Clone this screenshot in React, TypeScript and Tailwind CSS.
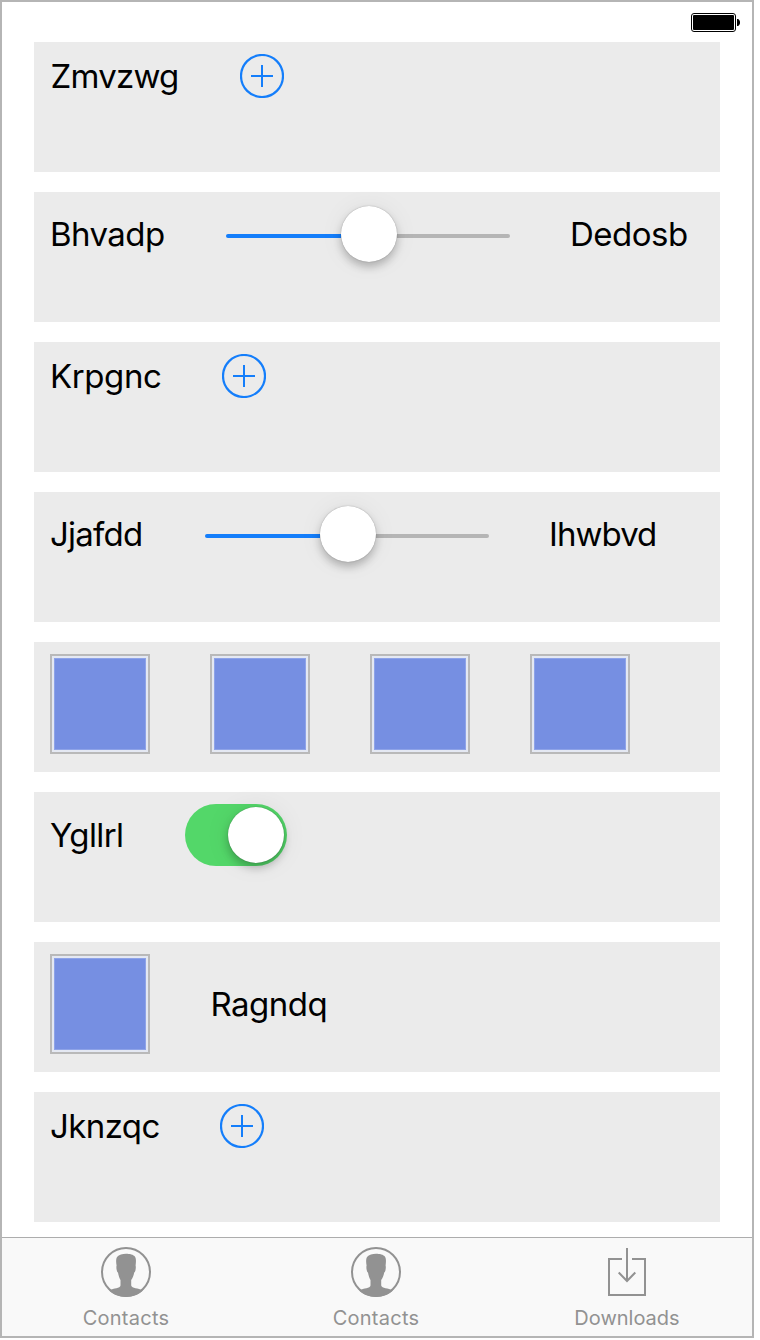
import type { ReactNode } from 'react';

function Row({ children }: { children: ReactNode }) {
  return <section className="flex h-[130px] w-[686px] shrink-0 items-start gap-[60px] bg-[#ebebeb] px-4 pt-3">{children}</section>;
}

function Label({ text, className }: { text: string; className: string }) {
  return <span className={`block h-11 shrink-0 whitespace-nowrap text-[33px] leading-[44px] text-black ${className}`}>{text}</span>;
}

function AddButton() {
  return (
    <button aria-label="Add" className="size-11 shrink-0">
      <svg viewBox="0 0 44 44" className="size-11" fill="none" stroke="#147efb" strokeWidth="2">
        <circle cx="22" cy="22" r="21" strokeWidth="2.2" />
        <path d="M11 22H33M22 11V33" />
      </svg>
    </button>
  );
}

function Slider() {
  return (
    <div className="mt-0.5 flex h-14 w-[284px] shrink-0 items-center">
      <div className="mt-1 h-1 w-[115px] rounded-l-full bg-[#147efb]" />
      <div className="relative z-10 size-14 rounded-full bg-white shadow-[0_0_1px_rgba(0,0,0,0.4),0_5px_8px_rgba(0,0,0,0.23),0_1px_26px_rgba(0,0,0,0.06)]" />
      <div className="mt-1 h-1 w-[113px] rounded-r-full bg-[#b5b5b5]" />
    </div>
  );
}

function Toggle() {
  return (
    <button aria-label="Toggle" className="flex h-[62px] w-[102px] shrink-0 items-center justify-end rounded-full bg-[#53d769] pr-[3px]">
      <span className="size-14 rounded-full bg-white shadow-[0_0_1px_rgba(0,0,0,0.4),0_5px_9px_rgba(0,0,0,0.23),0_1px_26px_rgba(0,0,0,0.08)]" />
    </button>
  );
}

function Tile() {
  return (
    <div className="size-[100px] shrink-0 border-2 border-[#b9b9b9] bg-[#e4e8f2] p-[2px]">
      <div className="size-full border border-[#8ea3e8] bg-[#768fe2]" />
    </div>
  );
}

function ContactIcon() {
  return (
    <svg viewBox="0 0 50 50" className="size-[50px]">
      <circle cx="25" cy="25" r="24" fill="none" stroke="#929292" strokeWidth="2" />
      <path fill="#929292" d="M8 43.5C13 41 19 41.5 19.5 38.5V33C18 30.5 17.5 28 17 25.5C15.6 25 15 20 15.6 18.5C15 15 14.8 12 16 10C18 7.5 21.5 6.8 25 6.8S32.5 7.5 34.2 10C35.3 12 35 15 34.6 18.5C35.2 20 34.5 25 33.2 25.5C32.7 28 32 30.5 30.2 33V38.5C31 41.5 37 41 42 43.5C33 52 17 52 8 43.5Z" />
    </svg>
  );
}

function DownloadIcon() {
  return (
    <svg viewBox="0 0 50 50" className="size-[50px]" fill="none" stroke="#929292" strokeWidth="2">
      <path d="M20 12H7V48H43V12H30" />
      <path d="M25 1V33.5M16.7 25.5L25 34L33.3 25.5" />
    </svg>
  );
}

function Tab({ label, children, className }: { label: string; children: ReactNode; className: string }) {
  return (
    <button className={`flex w-[250px] flex-col items-center pt-[9px] text-[#929292] ${className}`}>
      {children}
      <span className="mt-[7px] whitespace-nowrap text-[20px] leading-7">{label}</span>
    </button>
  );
}

export default function App() {
  return (
    <div className="h-[1340px] w-[760px] bg-white font-['Inter','Liberation_Sans',sans-serif]">
      <div className="flex h-[1338px] w-[754px] flex-col border-2 border-[#b5b5b5]">
        <header className="flex h-10 shrink-0 justify-end pr-3 pt-[11px]">
          <svg viewBox="0 0 49 19" className="h-[19px] w-[49px]">
            <rect x="0.5" y="0.5" width="44" height="18" rx="2.5" fill="white" stroke="black" />
            <rect x="2" y="2" width="41" height="15" rx="1" fill="black" />
            <path d="M46 6H47C49.7 7 49.7 12 47 13H46Z" fill="black" />
          </svg>
        </header>
        <main className="flex flex-1 flex-col gap-5 pl-8">
          <Row><Label text="Zmvzwg" className="w-[130px] pl-[0.5px] tracking-[-0.75px]" /><AddButton /></Row>
          <Row><Label text="Bhvadp" className="mt-2 w-[116px] tracking-[-0.55px]" /><Slider /><Label text="Dedosb" className="mt-2 w-[119px] tracking-[-0.5px]" /></Row>
          <Row><Label text="Krpgnc" className="w-[112px] tracking-[-0.4px]" /><AddButton /></Row>
          <Row><Label text="Jjafdd" className="mt-2 w-[95px] tracking-[-0.75px]" /><Slider /><Label text="Ihwbvd" className="mt-2 w-[109px] tracking-[-0.95px]" /></Row>
          <Row><Tile /><Tile /><Tile /><Tile /></Row>
          <Row><Label text="Ygllrl" className="mt-[9px] w-[75px] tracking-[-0.6px]" /><Toggle /></Row>
          <Row><Tile /><Label text="Ragndq" className="mt-7 w-[119px] pl-[0.5px] tracking-[-0.5px]" /></Row>
          <Row><Label text="Jknzqc" className="w-[110px] tracking-[-0.6px]" /><AddButton /></Row>
        </main>
        <nav className="flex h-[99px] shrink-0 border-t border-[#adadad] bg-[#f9f9f9]">
          <Tab label="Contacts" className="pr-[2px] tracking-[0.25px]"><ContactIcon /></Tab>
          <Tab label="Contacts" className="pr-[2px] tracking-[0.25px]"><ContactIcon /></Tab>
          <Tab label="Downloads" className="tracking-normal"><DownloadIcon /></Tab>
        </nav>
      </div>
    </div>
  );
}
